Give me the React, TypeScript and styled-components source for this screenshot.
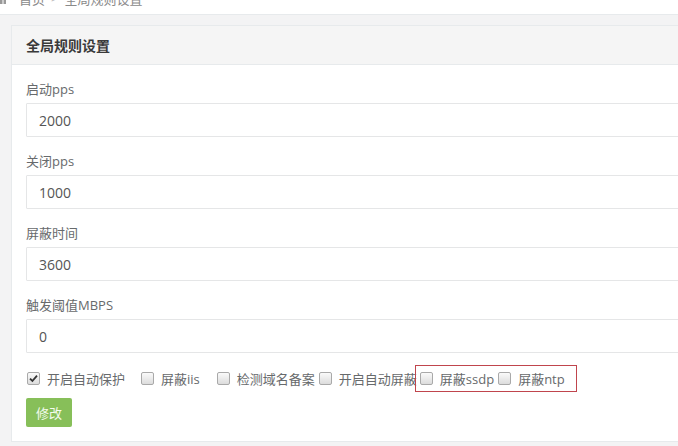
import React from "react";
import styled, { createGlobalStyle } from "styled-components";

const Global = createGlobalStyle`
  html, body { margin: 0; padding: 0; }
  body {
    background: #f3f3f4;
    font-family: "Open Sans", "Noto Sans CJK SC", sans-serif;
    font-size: 13px;
    color: #676a6c;
    overflow: hidden;
    width: 678px;
    height: 446px;
  }
`;

const Breadcrumb = styled.div`
  height: 14px;
  background: #fff;
  border-bottom: 1px solid #e7eaec;
  overflow: hidden;
`;

const Crumbs = styled.div`
  display: flex;
  align-items: center;
  gap: 6px;
  margin-top: -12px;
  height: 20px;
  color: #8a8a8a;
  font-size: 13px;
  white-space: nowrap;
`;

const Home = styled.span`
  margin-left: 7px;
`;

const Sep = styled.span`
  color: #bbb;
`;

const Wrapper = styled.div`
  padding: 10px 0 0 11px;
`;

const Panel = styled.div`
  width: 720px;
  border: 1px solid #e7eaec;
  background: #fff;
`;

const PanelHeader = styled.div`
  height: 38px;
  display: flex;
  align-items: center;
  padding: 0 14px;
  background: #f5f5f5;
  border-bottom: 1px solid #e7eaec;
`;

const Title = styled.h5`
  margin: 0;
  font-size: 14px;
  font-weight: 600;
  color: #3a3a3a;
`;

const PanelBody = styled.div`
  padding: 15px 14px 14px;
`;

const Group = styled.div`
  margin-bottom: 15px;
`;

const Label = styled.label`
  display: block;
  line-height: 18px;
  margin-bottom: 5px;
  font-size: 13px;
  color: #676a6c;
`;

const Input = styled.input`
  box-sizing: border-box;
  display: block;
  width: 100%;
  height: 34px;
  padding: 6px 12px;
  border: 1px solid #e5e6e7;
  border-radius: 1px;
  font-family: inherit;
  font-size: 14px;
  color: #555;
  background: #fff;
  outline: none;
`;

const CheckRow = styled.div`
  display: flex;
  align-items: center;
  height: 20px;
  margin-bottom: 10px;
  white-space: nowrap;
`;

const Item = styled.label<{ $trail: number }>`
  display: inline-flex;
  align-items: center;
  margin-right: ${(p) => p.$trail}px;
  font-size: 13px;
  color: #676a6c;
`;

const Box = styled.span`
  box-sizing: border-box;
  width: 13px;
  height: 13px;
  margin: 0 7px 0 1px;
  border: 1px solid #a9a9a9;
  border-radius: 2px;
  background: linear-gradient(#fafafa, #dcdcdc);
  display: inline-flex;
  align-items: center;
  justify-content: center;
`;

const Highlight = styled.span`
  display: inline-flex;
  align-items: center;
  height: 25px;
  margin: -3px 0 -3px -2px;
  padding: 0 11px 0 3px;
  border: 1px solid #c0454d;
`;

const Button = styled.button`
  height: 29px;
  padding: 0 10px;
  border: none;
  border-radius: 2px;
  background: #87bf59;
  color: #f4fbef;
  font-family: inherit;
  font-size: 13px;
`;

const fields = [
  { label: "启动pps", value: "2000" },
  { label: "关闭pps", value: "1000" },
  { label: "屏蔽时间", value: "3600" },
  { label: "触发阈值MBPS", value: "0" },
];

const Check = ({ checked }: { checked?: boolean }) => (
  <Box>
    {checked && (
      <svg width="9" height="9" viewBox="0 0 9 9">
        <path d="M1 4.6 L3.4 7 L8 1.6" fill="none" stroke="#333" strokeWidth="1.8" />
      </svg>
    )}
  </Box>
);

export default function App() {
  return (
    <>
      <Global />
      <Breadcrumb>
        <Crumbs>
          <svg width="6" height="12" viewBox="0 0 6 12">
            <rect x="0" y="0" width="2.5" height="12" fill="#999" />
            <rect x="3.5" y="0" width="2.5" height="12" fill="#999" />
          </svg>
          <Home>首页</Home>
          <Sep>&gt;</Sep>
          <span>全局规则设置</span>
        </Crumbs>
      </Breadcrumb>
      <Wrapper>
        <Panel>
          <PanelHeader>
            <Title>全局规则设置</Title>
          </PanelHeader>
          <PanelBody>
            {fields.map((f) => (
              <Group key={f.label}>
                <Label>{f.label}</Label>
                <Input defaultValue={f.value} />
              </Group>
            ))}
            <CheckRow>
              <Item $trail={15}>
                <Check checked />
                开启自动保护
              </Item>
              <Item $trail={16}>
                <Check />
                屏蔽iis
              </Item>
              <Item $trail={3}>
                <Check />
                检测域名备案
              </Item>
              <Item $trail={0}>
                <Check />
                开启自动屏蔽
              </Item>
              <Highlight>
                <Item $trail={3}>
                  <Check />
                  屏蔽ssdp
                </Item>
                <Item $trail={0}>
                  <Check />
                  屏蔽ntp
                </Item>
              </Highlight>
            </CheckRow>
            <Button>修改</Button>
          </PanelBody>
        </Panel>
      </Wrapper>
    </>
  );
}
